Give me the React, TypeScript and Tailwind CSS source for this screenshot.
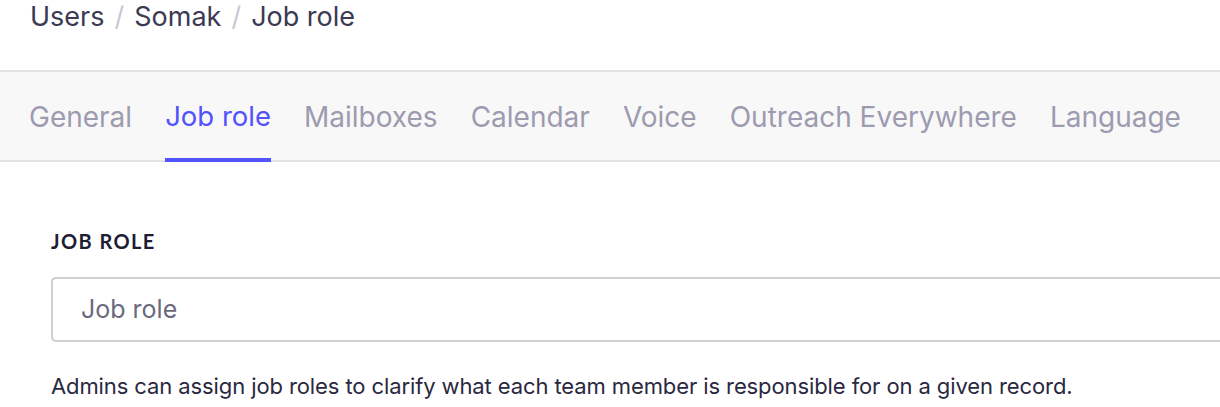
import React from "react";

const tabs = ["General", "Job role", "Mailboxes", "Calendar", "Voice", "Outreach Everywhere", "Language"];

export default function App() {
  return (
    <div className="w-[1220px] h-[407px] overflow-hidden bg-white" style={{ fontFamily: "Inter, 'Noto Sans', sans-serif" }}>
      <div className="h-[70px] pl-[30px] flex items-start">
        <div className="text-[27px] leading-[34px] text-[#3b3a52] flex items-center gap-[10px]">
          <span>Users</span>
          <span className="text-[#c9c8d2]">/</span>
          <span>Somak</span>
          <span className="text-[#c9c8d2]">/</span>
          <span>Job role</span>
        </div>
      </div>
      <div className="h-[92px] bg-[#f8f8f8] border-t-2 border-b-2 border-[#e3e3e3] flex items-stretch pl-[29px] gap-[33px]">
        {tabs.map((t) => (
          <div
            key={t}
            className={
              t === "Job role"
                ? "relative flex items-center pt-[2px] text-[27.5px] text-[#5252ff]"
                : "relative flex items-center pt-[2px] text-[28px] text-[#9d9bb0]"
            }
          >
            {t}
            {t === "Job role" && <div className="absolute left-0 right-0 bottom-[-2px] h-[4px] bg-[#5252ff]" />}
          </div>
        ))}
      </div>
      <div className="pl-[51px] pt-[68px]">
        <div className="text-[20px] font-bold text-[#1f1d33] leading-[22px] tracking-[1.4px]" style={{ fontFamily: "Lato, sans-serif" }}>
          JOB ROLE
        </div>
        <div className="mt-[25px] h-[65px] border-2 border-[#cfcfcf] border-r-0 rounded-l-[5px] flex items-center pl-[28px] text-[25px] text-[#6b697e]">
          Job role
        </div>
        <div className="mt-[31px] text-[22px] tracking-[-0.1px] text-[#2a2840] leading-[26px]">
          Admins can assign job roles to clarify what each team member is responsible for on a given record.
        </div>
      </div>
    </div>
  );
}
